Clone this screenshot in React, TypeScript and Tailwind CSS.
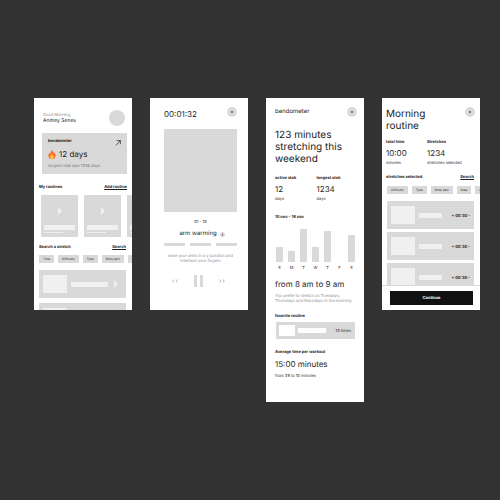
import type { ReactNode } from 'react';
import { clsx } from 'clsx';

const WEEK = [
  { day: 'S', value: 15 },
  { day: 'M', value: 11 },
  { day: 'T', value: 33 },
  { day: 'W', value: 15 },
  { day: 'T', value: 31 },
  { day: 'F', value: 0 },
  { day: 'S', value: 27 },
];

function Screen({ className, children }: { className?: string; children: ReactNode }) {
  return (
    <section className={clsx('flex flex-col overflow-hidden bg-white text-[#1c1c1c]', className)}>
      {children}
    </section>
  );
}

function CloseButton() {
  return (
    <button
      type="button"
      aria-label="Close"
      className="flex size-[10px] shrink-0 items-center justify-center rounded-full bg-[#d9d9d9]"
    >
      <svg viewBox="0 0 4 4" className="size-[4px]" stroke="#222" strokeWidth="0.6">
        <path d="M1.1 1.1 2.9 2.9M2.9 1.1 1.1 2.9" />
      </svg>
    </button>
  );
}

function SectionTitle({ title, action }: { title: string; action?: string }) {
  return (
    <div className="flex justify-between text-[4px] leading-[5px] font-bold">
      <h2>{title}</h2>
      {action && (
        <a href="#" className="underline">
          {action}
        </a>
      )}
    </div>
  );
}

function Chips({ items, children }: { items: string[]; children?: ReactNode }) {
  return (
    <div className="flex gap-[4px] overflow-hidden">
      {items.map((item) => (
        <button
          key={item}
          type="button"
          className="h-[8px] shrink-0 bg-[#d9d9d9] px-[4px] text-[3px] leading-[8px] [text-rendering:inherit]"
        >
          {item}
        </button>
      ))}
      {children}
    </div>
  );
}

function Play({ className }: { className?: string }) {
  return (
    <svg viewBox="0 0 4 8" className={clsx('h-[8px] w-[4px] shrink-0', className)} fill="#f0f0f0">
      <path d="M0 0 4 4 0 8Z" />
    </svg>
  );
}

function RoutineTile() {
  return (
    <div className="flex h-[42px] w-[37px] shrink-0 flex-col bg-[#d9d9d9] px-[3px] pt-[12px]">
      <Play className="self-center" />
      <div className="mt-[10px] h-[5px] bg-[#f0f0f0]" />
      <div className="mt-[2px] h-[1px] w-[19px] bg-[#f0f0f0]" />
    </div>
  );
}

function StretchRow({ time }: { time?: string }) {
  return (
    <li className="flex h-[28px] shrink-0 items-center bg-[#d9d9d9] px-[4px]">
      <div className="h-[18px] w-[24px] shrink-0 bg-[#f0f0f0]" />
      <div className={clsx('ml-[4px] h-[5px] bg-[#f0f0f0]', time ? 'w-[23px]' : 'w-[37px]')} />
      {time ? (
        <span className="ml-auto text-[4px] leading-[5px] font-bold">+ {time} -</span>
      ) : (
        <Play className="mr-[4px] ml-auto" />
      )}
    </li>
  );
}

function Stat({ label, value, unit }: { label: string; value: string; unit: string }) {
  return (
    <div className="text-[4px] leading-[5px]">
      <h3 className="font-bold">{label}</h3>
      <p className="mt-[4px] text-[8px] leading-[10px]">{value}</p>
      <p className="mt-[2px]">{unit}</p>
    </div>
  );
}

function HomeScreen() {
  return (
    <Screen className="h-[212px] pt-[12px]">
      <header className="flex shrink-0 items-center justify-between pr-[7px] pl-[9px]">
        <div className="leading-[6px]">
          <p className="text-[4px] text-[#8c8c8c]">Good Morning,</p>
          <p className="text-[5px]">Andrey Senes</p>
        </div>
        <div className="size-[16px] rounded-full bg-[#d9d9d9]" />
      </header>

      <div className="mt-[7px] mr-[5px] ml-[8px] shrink-0 bg-[#d9d9d9] px-[6px] pt-[5px] pb-[6px]">
        <div className="flex h-[5px] items-start justify-between">
          <h2 className="text-[4px] leading-[5px] font-bold">bendometer</h2>
          <svg
            viewBox="0 0 6 6"
            className="mt-[2px] size-[6px] shrink-0"
            fill="none"
            stroke="#1c1c1c"
            strokeWidth="0.7"
          >
            <path d="M0.8 5.4 5.4 0.6M1.8 0.6H5.4V4.2" />
          </svg>
        </div>
        <div className="mt-[6px] flex items-center gap-[3px]">
          <svg viewBox="0 0 16 18" className="h-[9px] w-[8px]">
            <path
              fill="#ff6a2b"
              d="M7 0C10 1.500 11.500 4 11.200 7.200c.8-.5 1.300-1.300 1.400-2.400C14.500 6.800 15.500 9.300 15.200 12c-.4 3.600-3.300 6-7.200 6s-6.800-2.400-7.200-6C.6 9.500 1.500 7.300 3 5.500c0 1.200.3 2 1 2.600C4.500 5 7.500 3.500 7 0Z"
            />
            <path
              fill="#ffc83d"
              d="M8 7.500c.2 2 3.600 3.300 3.600 6.200 0 2.200-1.500 3.800-3.700 3.800s-3.900-1.600-3.900-3.800c0-1.500.7-2.500 1.500-3.200.1.700.4 1.200.9 1.400C6.300 10.300 7 8.700 8 7.500Z"
            />
          </svg>
          <p className="text-[8px] leading-[10px]">12 days</p>
        </div>
        <p className="mt-[4px] text-[4px] leading-[5px] text-[#737373]">
          longest stak was 1234 days
        </p>
      </div>

      <div className="mt-[10px] mr-[5px] ml-[5px]">
        <SectionTitle title="My routines" action="Add routine" />
      </div>
      <div className="mt-[6px] ml-[7px] flex shrink-0 gap-[6px] overflow-hidden">
        <RoutineTile />
        <RoutineTile />
        <RoutineTile />
      </div>

      <div className="mt-[7px] mr-[6px] ml-[5px]">
        <SectionTitle title="Search a stretch" action="Search" />
      </div>
      <div className="mt-[6px] ml-[5px] shrink-0">
        <Chips items={['Time', 'Difficulty', 'Type', 'Body part']}>
          <div className="h-[8px] flex-1 bg-[#d9d9d9]" />
        </Chips>
      </div>
      <ul className="mt-[7px] mr-[6px] ml-[5px] flex shrink-0 flex-col gap-[5px]">
        <StretchRow />
        <StretchRow />
      </ul>
    </Screen>
  );
}

function TimerScreen() {
  return (
    <Screen className="h-[212px] px-[11px] pt-[9px]">
      <header className="flex items-start justify-between pl-[3px]">
        <p className="pt-[2px] text-[8px] leading-[10px]">00:01:32</p>
        <CloseButton />
      </header>
      <div className="ml-[3px] flex flex-1 flex-col items-center">
        <div className="mt-[10px] h-[83px] w-full bg-[#d9d9d9]" />
        <p className="mt-[7px] text-[4px] leading-[5px]">01 - 10</p>
        <div className="mt-[6px] flex items-center gap-[3px] pl-[3px]">
          <h2 className="text-[6px] leading-[8px]">arm warming</h2>
          <button
            type="button"
            aria-label="Info"
            className="flex size-[5px] items-center justify-center rounded-full bg-[#d9d9d9]"
          >
            <svg viewBox="0 0 5 5" className="size-[5px]" fill="#444">
              <path d="M2.200 1h.6v.6h-.6ZM2.200 2h.6v2h-.6Z" />
            </svg>
          </button>
        </div>
        <div className="mt-[5px] grid w-full grid-cols-3 gap-[5px]">
          <div className="h-[3px] bg-[#d9d9d9]" />
          <div className="h-[3px] bg-[#d9d9d9]" />
          <div className="h-[3px] bg-[#d9d9d9]" />
        </div>
        <p className="mt-[7px] text-center text-[4px] leading-[5px] text-[#8c8c8c]">
          raise your arms in a y position and
          <br />
          interlace your fingers
        </p>
        <div className="mt-[12px] flex w-full items-center justify-between pr-[12px] pl-[8px]">
          <button type="button" aria-label="Previous">
            <svg viewBox="0 0 6 4" className="block h-[4px] w-[6px]" fill="none" stroke="#b3b3b3" strokeWidth="0.8">
              <path d="M2.300.4.6 2 2.300 3.600M5.700.4 4 2 5.700 3.600" />
            </svg>
          </button>
          <button type="button" aria-label="Pause" className="flex gap-[3px]">
            <span className="h-[12px] w-[3px] bg-[#d9d9d9]" />
            <span className="h-[12px] w-[3px] bg-[#d9d9d9]" />
          </button>
          <button type="button" aria-label="Next">
            <svg viewBox="0 0 6 4" className="block h-[4px] w-[6px]" fill="none" stroke="#b3b3b3" strokeWidth="0.8">
              <path d="M.3.4 2 2 .3 3.600M3.700.4 5.400 2 3.700 3.600" />
            </svg>
          </button>
        </div>
      </div>
    </Screen>
  );
}

function WeekChart() {
  return (
    <div className="mt-[10px] mr-[3px] ml-[1px] flex justify-between">
      {WEEK.map(({ day, value }, i) => (
        <div key={i} className="flex w-[7px] flex-col">
          <div className="flex h-[33px] items-end">
            <div className="w-full bg-[#d9d9d9]" style={{ height: value }} />
          </div>
          <span className="mt-[3px] text-center text-[4px] leading-[5px]">{day}</span>
        </div>
      ))}
    </div>
  );
}

function StatsScreen() {
  return (
    <Screen className="pt-[9px] pr-[6px] pb-[24px] pl-[9px]">
      <header className="flex items-center justify-between">
        <p className="text-[6px] leading-[8px]">bendometer</p>
        <div className="pr-[1px]">
          <CloseButton />
        </div>
      </header>
      <h1 className="mt-[12px] text-[10px] leading-[12px]">
        123 minutes
        <br />
        stretching this
        <br />
        weekend
      </h1>
      <div className="mt-[10px] grid grid-cols-2">
        <Stat label="active stak" value="12" unit="days" />
        <Stat label="longest stak" value="1234" unit="days" />
      </div>

      <h2 className="mt-[13px] text-[4px] leading-[5px] font-bold">10 nov - 16 nov</h2>
      <WeekChart />

      <p className="mt-[9px] text-[8px] leading-[10px]">from 8 am to 9 am</p>
      <p className="mt-[4px] text-[4px] leading-[5px] whitespace-nowrap text-[#8c8c8c]">
        You prefer to stretch on Tuesdays,
        <br />
        Thursdays and Saturdays in the morning
      </p>

      <h2 className="mt-[10px] text-[4px] leading-[5px] font-bold">favorite routine</h2>
      <div className="mt-[4px] mr-[3px] ml-[1px] flex h-[17px] items-center bg-[#d9d9d9] px-[3px]">
        <div className="h-[11px] w-[16px] bg-white" />
        <div className="ml-[3px] h-[5px] w-[28px] bg-white" />
        <span className="mr-[1px] ml-auto text-[4px] leading-[5px]">12 times</span>
      </div>

      <h2 className="mt-[10px] text-[4px] leading-[5px] font-bold">Average time per workout</h2>
      <p className="mt-[5px] text-[8px] leading-[10px]">15:00 minutes</p>
      <p className="mt-[4px] text-[4px] leading-[5px]">from 25 to 10 minutes</p>
    </Screen>
  );
}

function RoutineScreen() {
  return (
    <Screen className="h-[212px]">
      <div className="min-h-0 flex-1 overflow-hidden pt-[9px] pl-[4px]">
        <header className="flex items-start justify-between pr-[5px]">
          <h1 className="pt-[1px] text-[10px] leading-[12px]">
            Morning
            <br />
            routine
          </h1>
          <CloseButton />
        </header>
        <div className="mt-[7px] mr-[12px] grid grid-cols-2">
          <Stat label="total time" value="10:00" unit="minutes" />
          <Stat label="Stretches" value="1234" unit="stretches selected" />
        </div>
        <div className="mt-[9px] mr-[6px]">
          <SectionTitle title="stretches selected" action="Search" />
        </div>
        <div className="mt-[7px] ml-[1px]">
          <Chips items={['Difficulty', 'Type', 'Body part', 'Area', 'A']} />
        </div>
        <ul className="mt-[7px] mr-[6px] ml-[1px] flex flex-col gap-[3px]">
          <StretchRow time="00:30" />
          <StretchRow time="00:30" />
          <StretchRow time="00:30" />
        </ul>
      </div>
      <footer className="border-t border-[#d9d9d9] bg-white pt-[5px] pr-[7px] pb-[5px] pl-[8px]">
        <button
          type="button"
          className="block h-[14px] w-full bg-[#111] text-[4px] leading-[14px] font-bold text-white [text-rendering:inherit]"
        >
          Continue
        </button>
      </footer>
    </Screen>
  );
}

export default function App() {
  return (
    <main className="grid min-h-screen grid-cols-4 items-start gap-[18px] bg-[#323232] pt-[98px] pr-[20px] pb-[98px] pl-[34px] font-['Inter',sans-serif] [text-rendering:geometricPrecision]">
      <HomeScreen />
      <TimerScreen />
      <StatsScreen />
      <RoutineScreen />
    </main>
  );
}
